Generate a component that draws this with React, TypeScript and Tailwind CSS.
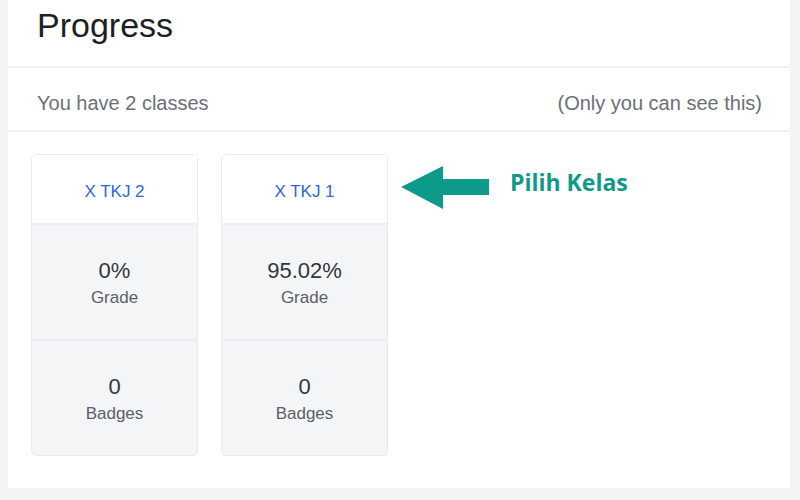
import React from 'react';

const FONT = "'Liberation Sans', Arial, sans-serif";

interface ClassStat {
  name: string;
  grade: string;
  badges: number;
}

const classes: ClassStat[] = [
  { name: 'X TKJ 2', grade: '0%', badges: 0 },
  { name: 'X TKJ 1', grade: '95.02%', badges: 0 },
];

function ClassCard({ c }: { c: ClassStat }) {
  return (
    <div className="w-[167px] h-[302px] flex flex-col border border-[#e8eaee] rounded-[5px] overflow-hidden bg-[#f4f5f7]">
      <div className="h-[70px] flex items-center justify-center pt-[5px] bg-white border-b-2 border-[#eceef1]">
        <span className="text-[17px] text-[#2f66d6]">{c.name}</span>
      </div>
      <div className="flex-1 flex flex-col items-center justify-center pt-[3px] border-b-2 border-[#eceef1]">
        <span className="text-[22px] leading-[26px] text-[#33363b]">{c.grade}</span>
        <span className="text-[17px] leading-[24px] mt-[2px] text-[#5b5f66]">Grade</span>
      </div>
      <div className="flex-1 flex flex-col items-center justify-center pt-[3px]">
        <span className="text-[22px] leading-[26px] text-[#33363b]">{c.badges}</span>
        <span className="text-[17px] leading-[24px] mt-[2px] text-[#5b5f66]">Badges</span>
      </div>
    </div>
  );
}

export default function App() {
  return (
    <div className="w-[800px] h-[500px] flex bg-[#f3f4f6] overflow-hidden" style={{ fontFamily: FONT }}>
      <div className="w-[8px]" />
      <div className="w-[782px] h-[488px] bg-white flex flex-col">
        {/* header */}
        <div className="h-[68px] border-b-2 border-[#eff1f3] pl-[29px] pt-[5px]">
          <h1 className="text-[34px] leading-[40px] text-[#1c1f23]">Progress</h1>
        </div>
        <div className="h-[64px] border-b-2 border-[#eff1f3] flex items-center justify-between pl-[29px] pr-[28px] pt-[8px] text-[20px] text-[#6b7079]">
          <span>You have 2 classes</span>
          <span>(Only you can see this)</span>
        </div>
        {/* class cards */}
        <div className="flex gap-[23px] pl-[23px] pt-[22px]">
          {classes.map((c) => (
            <ClassCard key={c.name} c={c} />
          ))}
          <div className="flex items-start pt-[12px] ml-[-10px] gap-[19px]">
            <svg width="90" height="44" viewBox="0 0 90 44">
              <polygon points="0,21 42,0 42,13 88,13 88,29 42,29 42,43" fill="#0e9a8b" />
            </svg>
            <span
              className="text-[23px] font-bold text-[#0e9a8b] leading-[30px] mt-[1px]"
              style={{ fontFamily: "'Open Sans', sans-serif" }}
            >
              Pilih Kelas
            </span>
          </div>
        </div>
      </div>
    </div>
  );
}
